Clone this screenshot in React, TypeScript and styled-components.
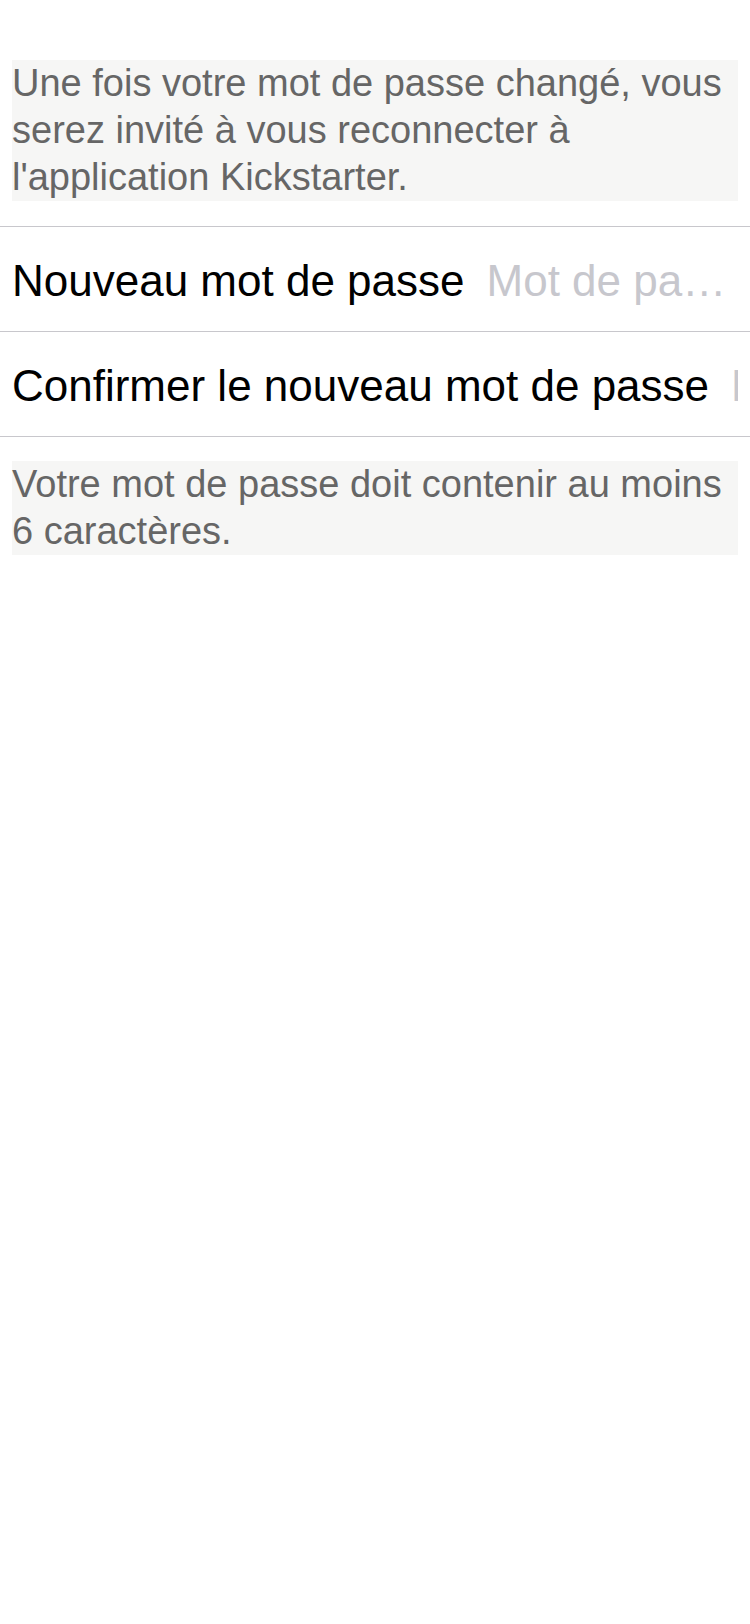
import React from "react";
import styled, { createGlobalStyle } from "styled-components";

const GlobalStyle = createGlobalStyle`
  html, body {
    margin: 0;
    padding: 0;
    background: #ffffff;
  }
  body {
    font-family: "Liberation Sans", Arial, sans-serif;
    -webkit-font-smoothing: antialiased;
  }
`;

const Screen = styled.main`
  width: 750px;
  min-height: 1624px;
  background: #ffffff;
  padding-top: 60px;
  box-sizing: border-box;
  display: flex;
  flex-direction: column;
`;

const Note = styled.p<{ $gapBefore?: number; $gapAfter?: number }>`
  margin: ${(p) => p.$gapBefore ?? 0}px 12px ${(p) => p.$gapAfter ?? 0}px;
  padding: 0;
  background: #f6f6f5;
  color: #666666;
  font-family: "Liberation Sans", Arial, sans-serif;
  font-size: 38px;
  line-height: 47px;
`;

const FieldList = styled.section`
  display: flex;
  flex-direction: column;
  border-top: 1px solid #c8c7cc;
`;

const FieldRow = styled.label`
  display: flex;
  align-items: center;
  gap: 22px;
  height: 100px;
  padding: 4px 12px 0;
  border-bottom: 1px solid #c8c7cc;
  box-sizing: content-box;
`;

const FieldLabel = styled.span`
  flex: none;
  color: #000000;
  font-size: 44px;
  white-space: nowrap;
`;

const FieldInput = styled.input<{ $overflow: "ellipsis" | "clip" }>`
  flex: 1;
  min-width: 0;
  border: none;
  outline: none;
  padding: 0;
  margin: 0;
  background: transparent;
  font-family: "Liberation Sans", Arial, sans-serif;
  font-size: 44px;
  color: #000000;
  text-overflow: ${(p) => p.$overflow};
  &::placeholder {
    color: #c7c7cd;
    opacity: 1;
  }
`;

const fields = [
  { label: "Nouveau mot de passe", overflow: "ellipsis" as const },
  { label: "Confirmer le nouveau mot de passe", overflow: "clip" as const },
];

export default function App() {
  return (
    <>
      <GlobalStyle />
      <Screen>
        <Note $gapAfter={25}>
          Une fois votre mot de passe changé, vous serez invité à vous
          reconnecter à l'application Kickstarter.
        </Note>
        <FieldList>
          {fields.map((f) => (
            <FieldRow key={f.label}>
              <FieldLabel>{f.label}</FieldLabel>
              <FieldInput
                type="password"
                placeholder="Mot de passe"
                $overflow={f.overflow}
              />
            </FieldRow>
          ))}
        </FieldList>
        <Note $gapBefore={24}>
          Votre mot de passe doit contenir au moins 6 caractères.
        </Note>
      </Screen>
    </>
  );
}
